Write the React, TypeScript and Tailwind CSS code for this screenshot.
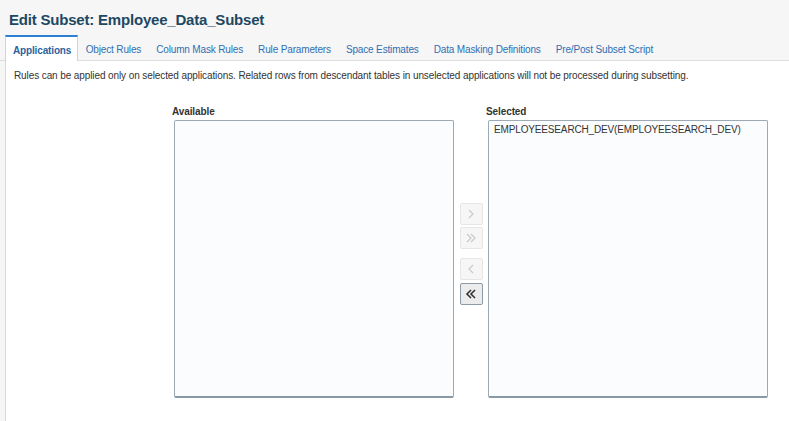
import React from "react";

const tabs = [
  "Applications",
  "Object Rules",
  "Column Mask Rules",
  "Rule Parameters",
  "Space Estimates",
  "Data Masking Definitions",
  "Pre/Post Subset Script",
];

const Chevron: React.FC<{ dir: "right" | "left"; double?: boolean; color: string }> = ({
  dir,
  double,
  color,
}) => {
  const single = dir === "right" ? "M4 2 L8 6 L4 10" : "M8 2 L4 6 L8 10";
  const dbl =
    dir === "right"
      ? "M2 2 L6 6 L2 10 M6 2 L10 6 L6 10"
      : "M6 2 L2 6 L6 10 M10 2 L6 6 L10 10";
  return (
    <svg width="12" height="12" viewBox="0 0 12 12">
      <path d={double ? dbl : single} fill="none" stroke={color} strokeWidth={double && color === "#333" ? 1.6 : 1.1} />
    </svg>
  );
};

const ShuttleButton: React.FC<{
  dir: "right" | "left";
  double?: boolean;
  enabled?: boolean;
  className?: string;
}> = ({ dir, double, enabled, className }) => (
  <div
    className={
      "w-[23px] h-[22px] flex items-center justify-center rounded-[2px] border " +
      (enabled
        ? "bg-[#ececec] border-[#8d9ba6] "
        : "bg-[#f6f6f6] border-[#e6e6e6] ") +
      (className ?? "")
    }
  >
    <Chevron dir={dir} double={double} color={enabled ? "#333" : "#c8c8c8"} />
  </div>
);

const ListBox: React.FC<{ label: string; items: string[] }> = ({ label, items }) => (
  <div className="flex flex-col">
    <div className="h-[15px] text-[10px] tracking-[-0.1px] font-bold text-[#333] -ml-[2px] leading-[15px]">
      {label}
    </div>
    <div className="w-[280px] h-[278px] mt-[1px] bg-[#fafcfe] border border-[#9eaab3] border-b-2 border-b-[#8898a4] rounded-[2px] px-[5px] pt-[2px]">
      {items.map((item) => (
        <div key={item} className="text-[10px] tracking-[-0.15px] leading-[13px] text-[#333]">
          {item}
        </div>
      ))}
    </div>
  </div>
);

export default function App() {
  return (
    <div
      className="w-[789px] h-[421px] bg-[#f6f6f6] flex flex-col overflow-hidden"
      style={{ fontFamily: '"Liberation Sans", Arial, sans-serif' }}
    >
      <div className="h-[35px] pl-[9px] pt-[10px] text-[15px] tracking-[-0.2px] font-bold text-[#1d4862] leading-[19px]">
        Edit Subset: Employee_Data_Subset
      </div>
      <div className="flex pl-[5px] h-[26px] border-b border-[#d9dee2]">
        {tabs.map((t, i) =>
          i === 0 ? (
            <div
              key={t}
              className="h-[27px] pl-[7px] pr-[6px] pt-[1px] flex items-center bg-white border-t-2 border-t-[#2d7fd1] border-x border-x-[#cfd4d8] text-[10px] tracking-[-0.15px] font-bold text-[#2b63a0]"
            >
              {t}
            </div>
          ) : (
            <div
              key={t}
              className="h-[26px] px-[7.5px] pt-[3px] flex items-center text-[10px] tracking-[-0.15px] text-[#2f6fb3]"
            >
              {t}
            </div>
          )
        )}
      </div>
      <div className="flex-1 ml-[5px] bg-white border-l border-[#d5d9dc] pl-[8px] pt-[8px]">
        <div className="text-[10px] tracking-[-0.1px] text-[#333] leading-[13px]">
          Rules can be applied only on selected applications. Related rows from descendant tables
          in unselected applications will not be processed during subsetting.
        </div>
        <div className="flex mt-[22px] ml-[160px]">
          <ListBox label="Available" items={[]} />
          <div className="w-[34px] flex flex-col items-center pt-[99px]">
            <ShuttleButton dir="right" />
            <ShuttleButton dir="right" double className="mt-[2px]" />
            <ShuttleButton dir="left" className="mt-[9px]" />
            <ShuttleButton dir="left" double enabled className="mt-[3px]" />
          </div>
          <ListBox label="Selected" items={["EMPLOYEESEARCH_DEV(EMPLOYEESEARCH_DEV)"]} />
        </div>
      </div>
    </div>
  );
}
